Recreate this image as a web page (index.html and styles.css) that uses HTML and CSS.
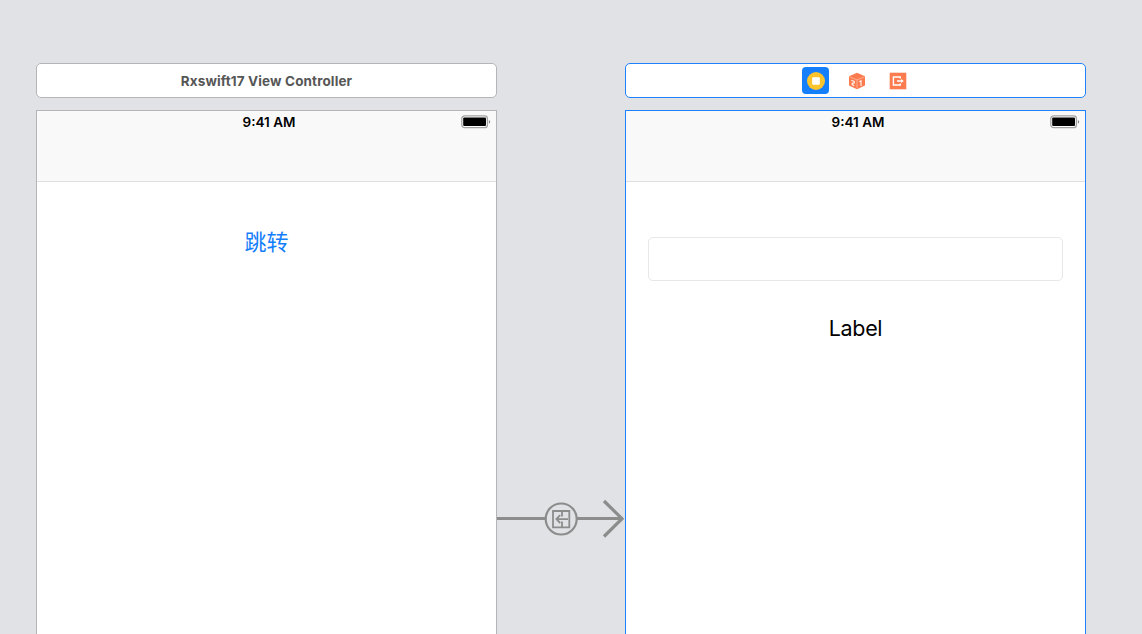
FILE: index.html
```html
<!DOCTYPE html>
<html lang="zh">
<head>
<meta charset="utf-8">
<title>Storyboard</title>
<link rel="stylesheet" href="styles.css">
</head>
<body>
<main class="canvas">
  <section class="scene">
    <header class="dock"><span class="dock-title">Rxswift17 View Controller</span></header>
    <div class="device">
      <div class="navbar">
        <span class="time">9:41 AM</span>
        <svg class="battery" width="30" height="14" viewBox="0 0 30 14"><rect x=".8" y=".9" width="25.6" height="11.8" rx="2.8" fill="#fff" stroke="#a3a3a3" stroke-width="1.3"/><rect x="2.2" y="2.5" width="22.8" height="8.4" rx="1" fill="#000"/><path d="M27.9 4.9q2.6 1.9 0 3.8z" fill="#858585"/></svg>
      </div>
      <div class="content"><a class="jump">跳转</a></div>
    </div>
  </section>

  <div class="segue">
    <svg width="128" height="44" viewBox="0 0 128 44" fill="none" stroke="#8c8c8c">
      <path d="M0 22.5H49M80 22.5H125" stroke-width="3.2"/>
      <path d="M107 5l18 17.7L107 40.5" stroke-width="3.2"/>
      <circle cx="64.2" cy="23" r="15.5" stroke-width="2.2"/>
      <path d="M56 15h16.3v16.3H56zM65 15v5.4M65 25.6v5.7M71 23.1H60M63.2 19.2l-3.8 3.9 3.8 3.9" stroke-width="1.8"/>
    </svg>
  </div>

  <section class="scene selected">
    <header class="dock">
      <span class="dock-item active"><svg width="20" height="20" viewBox="0 0 20 20"><circle cx="10" cy="10" r="9" fill="#fbc32c"/><rect x="6.2" y="6.2" width="7.6" height="7.6" rx="1" fill="#fff"/></svg></span>
      <span class="dock-item"><svg width="18" height="18" viewBox="0 0 18 18"><path d="M9 .8l8 3.4v9.2l-8 3.8-8-3.8V4.2z" fill="#fc7c50"/><path d="M1.4 4.8L9 7.9l7.6-3.1M9 7.9V16" fill="none" stroke="#ffc4ae" stroke-width=".7"/><path d="M3.4 8.2l2.8 1.2v1.5l-2 .4v1.3l2 1.1M11.3 9.8l1.7-1v5.2" fill="none" stroke="#ffece5" stroke-width="1.2"/></svg></span>
      <span class="dock-item"><svg width="18" height="18" viewBox="0 0 18 18"><path d="M.7.7h16.6v16.6H.7z" fill="#fc7c50"/><path d="M11.3 6.5V5H4.4v8h6.9v-1.5M8 9h5" fill="none" stroke="#fff" stroke-width="1.4"/><path d="M12 6.9L14.8 9 12 11.1z" fill="#fff"/></svg></span>
    </header>
    <div class="device">
      <div class="navbar">
        <span class="time">9:41 AM</span>
        <svg class="battery" width="30" height="14" viewBox="0 0 30 14"><rect x=".8" y=".9" width="25.6" height="11.8" rx="2.8" fill="#fff" stroke="#a3a3a3" stroke-width="1.3"/><rect x="2.2" y="2.5" width="22.8" height="8.4" rx="1" fill="#000"/><path d="M27.9 4.9q2.6 1.9 0 3.8z" fill="#858585"/></svg>
      </div>
      <div class="content form"><div class="field"></div><span class="label">Label</span></div>
    </div>
  </section>
</main>
</body>
</html>
```
FILE: styles.css
```css
* { box-sizing: border-box; }
body { margin: 0; font-family: Inter, "Noto Sans CJK SC", sans-serif; }
.canvas {
  display: flex;
  height: 634px;
  padding: 63px 0 0 36px;
  background: #e1e2e6;
  overflow: hidden;
}
.scene {
  --edge: #b5b5b7;
  display: flex;
  flex-direction: column;
  flex: none;
  width: 461px;
  gap: 12px;
}
.selected { --edge: #1f82fc; }
.dock {
  display: flex;
  align-items: center;
  justify-content: center;
  gap: 14px;
  height: 35px;
  flex: none;
  background: #fff;
  border: 1px solid var(--edge);
  border-radius: 5px;
}
.selected .dock { padding-left: 2px; }
.dock-title {
  padding-top: 1px;
  font-size: 13.5px;
  font-weight: 700;
  letter-spacing: 0.13px;
  line-height: 18px;
  color: #565656;
}
.dock-item {
  display: flex;
  align-items: center;
  justify-content: center;
  width: 27px;
  height: 27px;
  border-radius: 4px;
}
.active { background: #147efb; }
.device {
  flex: 1;
  background: #fff;
  border: 1px solid var(--edge);
  border-bottom: 0;
}
.navbar {
  display: grid;
  grid-template-columns: 1fr auto 1fr;
  align-items: start;
  height: 71px;
  padding: 4px 5px 0 8px;
  background: #f9f9f9;
  border-bottom: 1px solid #dfdfdf;
}
.time {
  grid-column: 2;
  padding-left: 2px;
  font-size: 13.5px;
  font-weight: 600;
  line-height: 15px;
  color: #000;
}
.battery { justify-self: end; }
.content {
  display: flex;
  flex-direction: column;
  align-items: center;
  padding-top: 44px;
}
.jump {
  font-size: 22px;
  line-height: 32px;
  color: #147efb;
}
.form { padding: 55px 22px 0; }
.field {
  width: 415px;
  height: 44px;
  border: 1px solid #e7e7e7;
  border-radius: 5px;
}
.label {
  margin-top: 32px;
  font-size: 21.5px;
  letter-spacing: -0.35px;
  line-height: 30px;
  color: #000;
}
.segue { width: 128px; flex: none; padding-top: 433px; }
.segue svg { display: block; }
```
